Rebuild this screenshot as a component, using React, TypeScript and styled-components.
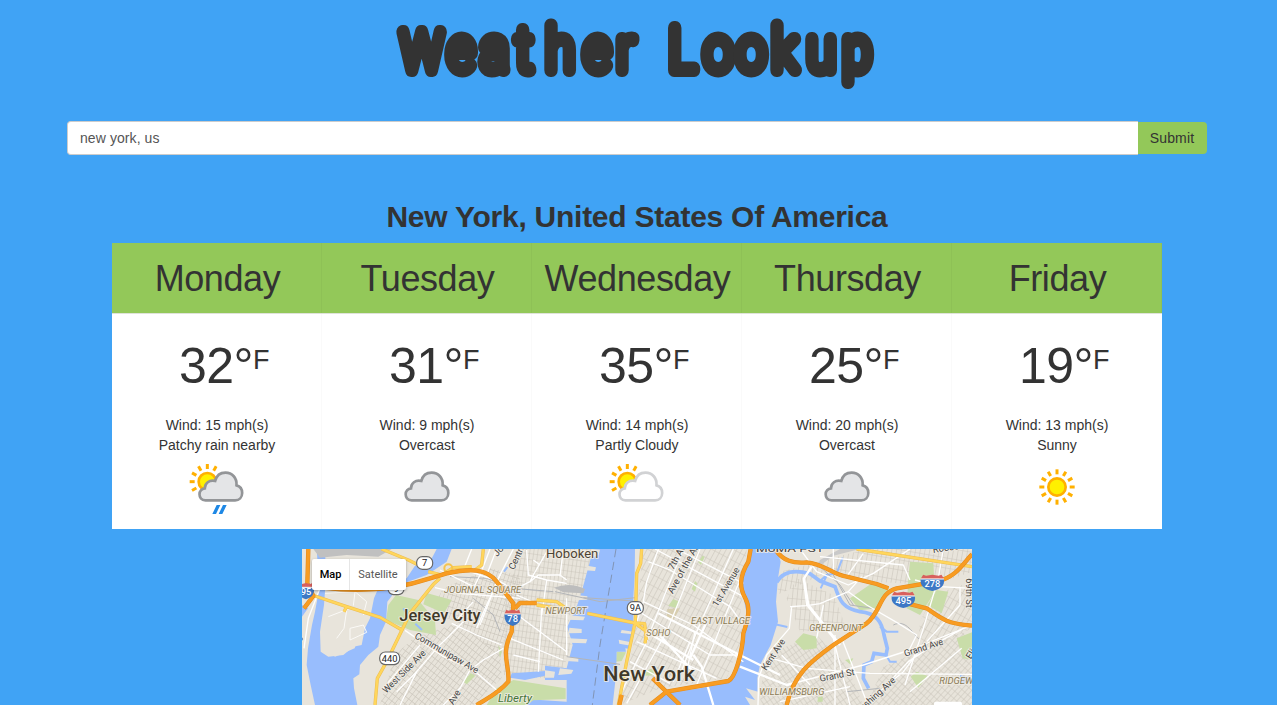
import React from "react";
import styled, { createGlobalStyle } from "styled-components";

const GlobalStyle = createGlobalStyle`
  * { box-sizing: border-box; }
  html, body { margin: 0; height: 705px; overflow: hidden; background: #40a3f5; }
  body { font-family: "Liberation Sans", Arial, sans-serif; font-size: 14px; line-height: 20px; color: #333; }
`;

const Page = styled.div`
  width: 1274px;
  height: 705px;
  overflow: hidden;
  display: flex;
  flex-direction: column;
  align-items: center;
`;

const Title = styled.h1`
  margin: 0;
  height: 121px;
  flex: none;
`;

const Wordmark = styled.svg`
  display: block;
  width: 494px;
  height: 110px;
  overflow: visible;
  font-family: Roboto, sans-serif;
  font-size: 60px;
  font-weight: 100;
  fill: #333;
  stroke: #333;
  stroke-width: 14px;
  stroke-linejoin: round;
  stroke-linecap: round;
`;

const SearchForm = styled.form`
  display: flex;
  width: 1140px;
  height: 34px;
`;

const SearchInput = styled.input`
  flex: 1;
  height: 34px;
  padding: 6px 12px;
  border: 1px solid #ccc;
  border-right: 0;
  border-radius: 4px 0 0 4px;
  background: #fff;
  color: #555;
  font: 14px/20px "Liberation Sans", Arial, sans-serif;
  letter-spacing: 0.08px;
  outline: none;
`;

const SubmitButton = styled.button`
  width: 69px;
  height: 32px;
  margin-top: 1px;
  padding: 0 1px 0 0;
  border: 0;
  border-radius: 0 4px 4px 0;
  background: #93c859;
  color: #333;
  font: 14px/20px "Liberation Sans", Arial, sans-serif;
  letter-spacing: 0.12px;
`;

const Place = styled.h2`
  margin: 45px 0 10px;
  font-size: 30px;
  line-height: 33px;
  font-weight: 700;
  letter-spacing: -0.25px;
  white-space: nowrap;
`;

const Forecast = styled.section`
  display: grid;
  grid-template-columns: repeat(5, 210px);
  height: 286px;
  background: #fff;
`;

const DayCard = styled.article`
  text-align: center;
  box-shadow: inset -1px 0 rgba(0, 0, 0, 0.02);
  &:last-child { box-shadow: none; }
`;

const DayName = styled.h3`
  margin: 0;
  height: 70px;
  padding-left: 1px;
  background: #93c859;
  box-shadow: inset -1px 0 rgba(0, 0, 0, 0.03), 0 1px #dfe3da;
  font-size: 36px;
  line-height: 72px;
  font-weight: 400;
  letter-spacing: -0.4px;
`;

const Temperature = styled.div`
  display: flex;
  justify-content: center;
  height: 102px;
  padding: 24px 0 0 14px;
  font-size: 50px;
  line-height: 58px;
  letter-spacing: -0.5px;
`;

const Unit = styled.span`
  font-size: 27px;
  line-height: 46px;
`;

const Detail = styled.div`
  height: 20px;
`;

const ConditionIcon = styled.svg`
  display: block;
  width: 64px;
  height: 64px;
  margin: 0 auto;
`;

const MapFrame = styled.section`
  position: relative;
  flex: none;
  width: 670px;
  height: 156px;
  margin-top: 20px;
  overflow: hidden;
`;

const MapDrawing = styled.svg`
  display: block;
  width: 670px;
  height: 156px;
`;

const MapSwitch = styled.div`
  position: absolute;
  left: 10px;
  top: 10px;
  display: flex;
  height: 31px;
  border-radius: 2px;
  background: #fff;
  box-shadow: 0 1px 3px rgba(0, 0, 0, 0.3);
  font: 11px/31px Roboto, sans-serif;
`;

const MapSwitchItem = styled.span<{ $active?: boolean }>`
  width: ${(p) => (p.$active ? 38 : 56)}px;
  text-align: center;
  color: ${(p) => (p.$active ? "#000" : "#565656")};
  font-weight: ${(p) => (p.$active ? 500 : 400)};
  border-right: ${(p) => (p.$active ? "1px solid #e6e6e6" : "0")};
`;

type Sky = "rain" | "overcast" | "partly" | "sunny";

const CLOUD =
  "M95 136 C82 136 77 126 77 118 C77 108 84 101 93 100 C93 85 106 74 124 78 C128 62 140 53 155 53 C175 53 190 69 188 91 C200 94 205 104 205 114 C205 127 196 136 184 136 Z";

function Sun({ cx, cy, angles }: { cx: number; cy: number; angles: number[] }) {
  return (
    <g transform={`translate(${cx} ${cy})`}>
      <circle r="26" fill="#fff000" stroke="#ffb000" strokeWidth="8" />
      {angles.map((a) => (
        <path key={a} d="M38 0H53" stroke="#ffb000" strokeWidth="9" transform={`rotate(${a})`} />
      ))}
    </g>
  );
}

function SkyIcon({ sky }: { sky: Sky }) {
  const behind = [150, 180, 210, 240, 270, 300];
  const all = Array.from({ length: 12 }, (_, i) => i * 30);
  return (
    <ConditionIcon viewBox="45 0 192 192">
      {(sky === "rain" || sky === "partly") && <Sun cx={112} cy={80} angles={behind} />}
      {sky === "sunny" && <Sun cx={141} cy={96} angles={all} />}
      {sky !== "sunny" && (
        <path
          d={CLOUD}
          transform={sky === "overcast" ? undefined : "translate(11.5 0)"}
          fill={sky === "partly" ? "#fff" : "#e4e5e7"}
          stroke={sky === "partly" ? "#d1d2d4" : "#939598"}
          strokeWidth="8"
        />
      )}
      {sky === "rain" && <path d="M127 177L140 150H151L138 177ZM146 177L159 150H170L157 177Z" fill="#1e88e5" />}
    </ConditionIcon>
  );
}

const days: { name: string; temp: number; wind: number; text: string; sky: Sky }[] = [
  { name: "Monday", temp: 32, wind: 15, text: "Patchy rain nearby", sky: "rain" },
  { name: "Tuesday", temp: 31, wind: 9, text: "Overcast", sky: "overcast" },
  { name: "Wednesday", temp: 35, wind: 14, text: "Partly Cloudy", sky: "partly" },
  { name: "Thursday", temp: 25, wind: 20, text: "Overcast", sky: "overcast" },
  { name: "Friday", temp: 19, wind: 13, text: "Sunny", sky: "sunny" },
];

const WATER = "#98bdfd";
const PARK = "#c9dda9";

const water = [
  "M50 12H75L78 100L72 180L60 260L62 320L85 335L130 330L160 305L185 300L195 250L210 220L222 160L235 130L320 100L345 62L390 50L410 12H455L440 50L380 90L320 112L285 140L262 170L258 230L240 270L235 305L205 330L180 360L178 388L160 400L162 430L172 480H45L32 420L20 360L24 310L36 240L45 200L58 130Z",
  "M6 180L24 190L6 215Z",
  "M880 12H1005L1004 90L1000 160L1000 230L990 300L986 320L950 320L948 390L938 480H660L675 462L800 470L800 405L735 405V392L675 405L630 398L635 385L735 378V362L800 370L818 300L802 245L832 180L845 140Z",
  "M1050 480L1095 445L1200 430L1290 412L1330 330V270L1345 230L1325 130L1330 80L1352 12H1430L1442 50L1434 100L1428 170L1434 230L1412 300L1380 360L1372 400L1374 480Z",
  "M1980 420V390L2016 400V405Z",
];
const creeks = [
  "M1430 112C1450 75 1490 75 1530 86L1560 108L1605 125C1620 170 1630 190 1680 200C1730 205 1745 230 1752 270L1762 310L1758 330L1722 325L1715 350L1692 360L1690 400L1706 430",
  "M1740 245L1760 260H1795M1758 330L1770 350H1790M1560 108L1580 90L1610 85L1628 38M1580 92L1562 130M1425 238L1462 246M310 190L320 205M346 236L366 255M612 80L622 66",
];
const parks = [
  "M288 150L355 165L405 225L408 270L330 255L258 225L265 180Z",
  "M380 144L455 165L432 205L370 178Z",
  "M490 410L512 384L526 392L500 418Z",
  "M595 300L606 320L600 338Z",
  "M855 100L882 103L872 114L855 110Z",
  "M950 320L978 322L965 348L948 350Z",
  "M1018 393L1050 372L1064 376L1060 391Z",
  "M1175 132L1185 108L1192 115L1185 140ZM1195 52L1207 32L1214 35L1203 60Z",
  "M1105 182L1120 162L1138 170L1130 190Z",
  "M1650 160L1720 112L1768 128L1730 190L1680 196Z",
  "M1830 50L1900 55L1905 140L1860 210L1820 190L1825 100Z",
  "M1910 135L1945 140L1925 205L1882 180Z",
  "M1485 290L1510 265L1550 275L1550 310L1510 315Z",
  "M1832 395L1850 380L1882 393L1855 428Z",
  "M1970 280L2016 262V345L1988 340Z",
  "M1635 345L1660 340L1650 358Z",
  "M1555 455H1568V470H1552Z",
  "M1430 290L1448 275L1425 305Z",
];

const blocks: { d: string; angle: number; size: string }[] = [
  { d: "M340 280L470 235L600 320L605 400L520 480H240L285 330Z", angle: 38, size: "a" },
  { d: "M390 200L430 130L570 70L660 90V200L640 200L600 330L470 230Z", angle: 18, size: "a" },
  { d: "M650 12H880L840 160L800 240L815 300L790 370L735 400L610 390V200Z", angle: 8, size: "a" },
  { d: "M1030 12H1340L1320 220L1330 270L1280 400L1080 430L960 480L1000 300Z", angle: 28, size: "b" },
  { d: "M1445 310L1550 270L1640 360L1690 480H1380L1390 360Z", angle: -35, size: "a" },
  { d: "M1440 80L1700 12H2016V80L1900 120L1720 110L1600 75L1430 150Z", angle: 10, size: "b" },
  { d: "M1490 100L1600 150L1640 250L1500 260L1460 160Z", angle: 5, size: "b" },
  { d: "M1750 365L1990 260L2016 320V480H1700Z", angle: 42, size: "a" },
  { d: "M1860 230L1900 150L2016 110V250L1850 330Z", angle: 30, size: "b" },
];

const streets = [
  // Jersey City
  "M60 130L25 220L12 310M405 128L480 145L660 160M480 70L600 110L660 145M420 75L520 125M570 12L540 90L510 150M490 230L410 310L350 380L300 480",
  "M315 256L430 335L520 375L590 435M455 235L530 270L605 300M610 310L550 345L510 375L480 430L430 480M605 80L560 180L530 250M470 225L520 170M290 440L350 380M360 300L250 430",
  "M590 12L560 90M640 12L595 100L540 240M515 12L490 75",
  // Hoboken and Newport
  "M745 12L700 90L690 110M700 45L720 60M660 125L690 110L715 90L780 90L800 105M680 15L685 90L740 105L725 210M740 105L800 115M790 12L780 95M640 200L800 320M630 280L790 345M800 160V330M725 190L715 380M640 330L720 350M650 150L720 180L800 200",
  // Manhattan
  "M1075 12L1040 110L1030 170L1000 260M1150 12L1090 160L1035 300L960 450M1200 12L1100 260L980 475M1300 12L1190 260L1140 390M1330 80L1240 300L1190 420",
  "M1045 50L1110 75L1290 185L1330 240M1030 170L1180 240L1330 350M1025 205L1230 330L1320 330M1010 290L1250 400M990 350L1110 415M1065 12L1330 155M1130 12L1330 115",
  "M1170 290L1120 410M1185 260L1160 380",
  // Queens and Brooklyn
  "M1500 12L1550 80L1645 120L1720 85L1830 12M1510 100L1520 180L1600 280L1650 480M1470 185L1520 182L1560 176L1645 140L1685 95M1475 185L1468 250L1400 330L1376 400L1374 480",
  "M1600 12V80M1690 25L1640 95M1560 35L1810 60L1830 105M1930 12L1915 100L1870 250L1815 420M1645 140L1700 180L1795 235L1850 270L1820 330",
  "M1570 180L1550 280M1605 270V480M1415 340L1520 370L1710 385L2016 388M1460 420L1690 360L1830 315L2016 240M1440 470L1650 425M1750 430L1825 350L1900 300L1990 250M1690 480L1810 380L1860 315M1985 310L1830 440M1980 125V180L1880 290",
  "M1445 330L1530 420M1625 280L1700 470M1845 105L1920 125L2016 130",
];

const avenues = [
  "M1180 330L1205 365L1240 480M1075 205L1330 335L1440 390M1040 260L1180 345M1060 250L1180 380M1220 230L1170 340",
  "M1320 365L1460 420L1480 415M1535 65L1512 100L1525 180L1620 300",
];

const yellow = [
  "M6 145L45 153L140 185L240 217L306 255L330 205L400 118L420 100",
  "M306 255L260 350L232 400L225 480M245 12L325 45L360 62M385 80L425 90L460 68L515 65M550 12L545 60L525 75",
  "M140 185L132 200M1025 12L1022 55L1010 85L1006 230L980 350L955 480M710 165L770 170L795 188M710 180L775 190M862 205L1005 234L1034 236L1039 285M1006 235L1040 260L1035 295",
  "M1670 12L2016 65",
];

const orange = [
  "M25 12L22 115L40 153L12 190M70 128C200 145 300 130 390 100L440 85C510 70 560 70 590 110L640 175L635 260C600 330 630 360 625 410C590 450 560 460 530 480M645 190L660 174L710 174",
  "M1352 12L1345 50C1315 100 1320 130 1336 160C1352 190 1345 220 1330 265C1328 320 1305 400 1285 408L1100 440L1050 480M1058 400L1140 480M958 480L965 450",
  "M1425 12C1450 50 1480 55 1520 52C1570 55 1600 90 1640 95L1730 117L1765 130M1800 170L1880 190C1930 225 1940 235 2016 242M1460 480C1480 390 1530 350 1600 300L1700 235C1745 200 1735 145 1790 130L1910 110C1970 95 1985 60 2016 28",
];

interface MapLabel {
  text: string;
  x: number;
  y: number;
  size: number;
  width?: number;
  angle?: number;
  tone?: "city" | "town" | "area" | "street" | "park";
}

const labels: MapLabel[] = [
  { text: "Jersey City", x: 298, y: 228, size: 48, width: 244, tone: "city" },
  { text: "New York", x: 910, y: 407, size: 60, width: 275, tone: "city" },
  { text: "Hoboken", x: 738, y: 40, size: 38, width: 157, tone: "town" },
  { text: "JOURNAL SQUARE", x: 432, y: 144, size: 27, width: 232, tone: "area" },
  { text: "NEWPORT", x: 736, y: 207, size: 27, width: 124, tone: "area" },
  { text: "SOHO", x: 1039, y: 273, size: 27, width: 72, tone: "area" },
  { text: "EAST VILLAGE", x: 1173, y: 237, size: 27, width: 177, tone: "area" },
  { text: "GREENPOINT", x: 1528, y: 257, size: 27, width: 160, tone: "area" },
  { text: "WILLIAMSBURG", x: 1378, y: 449, size: 27, width: 195, tone: "area" },
  { text: "RIDGEWOOD", x: 1918, y: 416, size: 27, width: 158, tone: "area" },
  { text: "Liberty", x: 594, y: 470, size: 33, width: 102, tone: "park" },
  { text: "Communipaw Ave", x: 342, y: 278, size: 28, width: 216, angle: 30 },
  { text: "West Side Ave", x: 259, y: 446, size: 28, width: 170, angle: -45 },
  { text: "Ave", x: 460, y: 481, size: 28, angle: -60 },
  { text: "Jo", x: 592, y: 36, size: 28, angle: -50 },
  { text: "Central", x: 642, y: 76, size: 28, angle: -65 },
  { text: "7th Ave", x: 1120, y: 76, size: 28, angle: -62 },
  { text: "Ave of the Americas", x: 1118, y: 148, size: 28, angle: -61 },
  { text: "1st Avenue", x: 1252, y: 187, size: 28, width: 132, angle: -59 },
  { text: "Kent Ave", x: 1399, y: 378, size: 28, width: 106, angle: -57 },
  { text: "Grand St", x: 1561, y: 410, size: 28, width: 106, angle: -11 },
  { text: "Grand Ave", x: 1816, y: 335, size: 28, width: 121, angle: -18 },
  { text: "Flushing Ave", x: 1673, y: 512, size: 28, width: 155, angle: -42 },
  { text: "69th St", x: 1998, y: 100, size: 28, width: 88, angle: 90 },
  { text: "MoMA PS1", x: 1368, y: 20, size: 29, width: 202 },
  { text: "Roosevelt", x: 1900, y: 24, size: 28, angle: -9 },
  { text: "Eliot", x: 2012, y: 344, size: 28, angle: -58 },
  { text: "e", x: 5, y: 291, size: 28, angle: -75 },
];

const tones = {
  city: { fill: "#403829", weight: 500, style: "normal" },
  town: { fill: "#4d4434", weight: 400, style: "normal" },
  area: { fill: "#8a7a54", weight: 400, style: "italic" },
  street: { fill: "#444", weight: 400, style: "normal" },
  park: { fill: "#44743a", weight: 400, style: "italic" },
};

function RouteShield({ x, y, text }: { x: number; y: number; text: string }) {
  const w = text.length > 2 ? 60 : 48;
  return (
    <g transform={`translate(${x} ${y})`}>
      <rect x={-w / 2} y="-19" width={w} height="38" rx="17" fill="#fff" stroke="#666" strokeWidth="3.5" />
      <text y="10" textAnchor="middle" fontSize="28" fill="#222">{text}</text>
    </g>
  );
}

function InterstateShield({ x, y, text }: { x: number; y: number; text: string }) {
  const s = text.length > 2 ? 1.45 : 1;
  return (
    <g transform={`translate(${x} ${y})`}>
      <g transform={`scale(${s} 1)`}>
        <path d="M-19 -25L-13 -22L0 -25L13 -22L19 -25L24 -13H-24Z" fill="#d8605d" />
        <path d="M-24 -12H24C26 8 18 18 0 24C-18 18 -26 8 -24 -12Z" fill="#3d78c5" />
        <path d="M-24 -12H24" stroke="#fff" strokeWidth="3" />
      </g>
      <text y="12" textAnchor="middle" fontSize="28" fontWeight="500" fill="#fff">{text}</text>
    </g>
  );
}

function Roads({ paths, edge, fill, width }: { paths: string[]; edge: string; fill: string; width: number }) {
  return (
    <g fill="none" strokeLinejoin="round">
      {paths.map((d) => <path key={d} d={d} stroke={edge} strokeWidth={width + 3} />)}
      {paths.map((d) => <path key={d} d={d} stroke={fill} strokeWidth={width} />)}
    </g>
  );
}

function CityMap() {
  return (
    <MapDrawing viewBox="6 12 2010 468" fontFamily="Roboto, sans-serif">
      <defs>
        {blocks.map((b, i) => (
          <pattern
            key={i}
            id={`blocks-${i}`}
            width={b.size === "a" ? 12 : 14}
            height={b.size === "a" ? 18 : 30}
            patternUnits="userSpaceOnUse"
            patternTransform={`rotate(${b.angle})`}
          >
            <path d="M0 0H14M0 0V30" stroke="#cbc6bc" strokeWidth="3.4" />
          </pattern>
        ))}
      </defs>
      <rect x="6" y="12" width="2010" height="468" fill="#e8e4db" />
      {blocks.map((b, i) => <path key={i} d={b.d} fill={`url(#blocks-${i})`} />)}
      {parks.map((d) => <path key={d} d={d} fill={PARK} />)}
      {water.map((d) => <path key={d} d={d} fill={WATER} />)}
      <path d="M560 480L590 430L640 405L797 430V462L700 466L680 480Z" fill={PARK} />
      {creeks.map((d, i) => <path key={d} d={d} fill="none" stroke={WATER} strokeWidth={i ? 6 : 11} />)}
      <path d="M40 12H275L235 35L140 30L60 38Z" fill="#c0c0c0" />
      <path d="M762 128Q810 110 855 132L850 145L790 142Z" fill="#bdbdbd" />
      <path d="M1560 45L1620 12H1680L1600 32L1550 70Z" fill="#c9c9c9" />
      <path d="M1102 192L1140 190L1120 225L1100 215Z" fill="#d8ceb0" />
      <g fill="#e8e4db">
        <path d="M875 12L900 14L896 30L872 40ZM862 62L888 67L885 78L855 76ZM830 150L862 154V164L825 166ZM800 210L855 215L850 226L800 224ZM808 248L845 252V264L806 265ZM805 280L862 283L858 295L804 293ZM800 335L835 340V350L798 348ZM780 370L820 375L814 386L775 390Z" />
        <path d="M965 255L1000 260V268L962 264ZM956 284L993 292V302L958 296ZM976 310L1000 314V322L978 321ZM735 376L765 380L762 398H735Z" />
        <path d="M1374 440L1338 430L1365 465L1335 455L1350 480H1374Z" />
        <path d="M84 320L170 292L164 310L105 335Z" />
      </g>
      <g fill="none" stroke="#fbfaf7" strokeWidth="3">
        <path d="M75 145L165 140L160 182M85 215L150 190M140 195L132 250L110 280M165 140L200 170L190 210M150 250L190 240L200 262L150 285Z" />
      </g>
      <g fill="none" stroke="#b3b5b8" strokeWidth="3">
        <path d="M765 140L900 170L1006 158M850 158L1000 168M800 335L960 358M1600 90L1650 180L1720 190M1560 65L1620 120L1660 180M1780 240C1820 220 1840 270 1860 285M1640 440L1740 430M450 95L560 100L640 130L760 140M520 160L580 210L600 260" />
        <path d="M948 12L900 300L877 480" strokeDasharray="25 14" stroke="#8194b4" />
      </g>
      <g fill="none" stroke="#fff" strokeWidth="4" strokeLinejoin="round">
        {streets.map((d) => <path key={d} d={d} />)}
      </g>
      <g fill="none" stroke="#fff" strokeWidth="7" strokeLinejoin="round">
        {avenues.map((d) => <path key={d} d={d} />)}
      </g>
      <Roads paths={yellow} edge="#edbd52" fill="#ffd65c" width={7} />
      <circle cx="445" cy="70" r="12" fill="none" stroke="#f6c54e" strokeWidth="6" />
      <Roads paths={orange} edge="#e28a1c" fill="#f89c22" width={10} />
      <g stroke="#f2eee6" strokeOpacity="0.8" strokeWidth="6" strokeLinejoin="round" style={{ paintOrder: "stroke" }}>
        {labels.map((l) => {
          const tone = tones[l.tone ?? "street"];
          return (
            <text
              key={l.text}
              transform={`translate(${l.x} ${l.y}) rotate(${l.angle ?? 0})`}
              fontSize={l.size}
              textLength={l.width}
              lengthAdjust="spacingAndGlyphs"
              fill={tone.fill}
              fontWeight={tone.weight}
              fontStyle={tone.style}
            >
              {l.text}
            </text>
          );
        })}
      </g>
      <RouteShield x={374} y={54} text="7" />
      <RouteShield x={288} y={130} text="9" />
      <RouteShield x={269} y={340} text="440" />
      <RouteShield x={1006} y={189} text="9A" />
      <InterstateShield x={18} y={139} text="95" />
      <InterstateShield x={638} y={219} text="78" />
      <InterstateShield x={1897} y={114} text="278" />
      <InterstateShield x={1810} y={165} text="495" />
      <rect x="1902" y="470" width="84" height="20" rx="5" fill="#fff" />
    </MapDrawing>
  );
}

// Left edge of each letter of the heading, in the drawing's own pixels.
const letterStarts = [11, 58, 91, 126, 156, 194, 227, 260, 279, 314, 347, 382, 417, 453];
const LETTER_SQUEEZE = 0.86;

export default function App() {
  return (
    <>
      <GlobalStyle />
      <Page>
        <Title>
          <Wordmark viewBox="0 0 494 110">
            <text
              transform={`scale(${LETTER_SQUEEZE} 1)`}
              x={letterStarts.map((x) => (x / LETTER_SQUEEZE).toFixed(1)).join(" ")}
              y="70"
            >
              <tspan fontSize="53">W</tspan>eather Lookup
            </text>
          </Wordmark>
        </Title>
        <SearchForm>
          <SearchInput defaultValue="new york, us" />
          <SubmitButton type="button">Submit</SubmitButton>
        </SearchForm>
        <Place>New York, United States Of America</Place>
        <Forecast>
          {days.map((day) => (
            <DayCard key={day.name}>
              <DayName>{day.name}</DayName>
              <Temperature>
                {day.temp}°<Unit>F</Unit>
              </Temperature>
              <Detail>Wind: {day.wind} mph(s)</Detail>
              <Detail>{day.text}</Detail>
              <SkyIcon sky={day.sky} />
            </DayCard>
          ))}
        </Forecast>
        <MapFrame>
          <CityMap />
          <MapSwitch>
            <MapSwitchItem $active>Map</MapSwitchItem>
            <MapSwitchItem>Satellite</MapSwitchItem>
          </MapSwitch>
        </MapFrame>
      </Page>
    </>
  );
}
